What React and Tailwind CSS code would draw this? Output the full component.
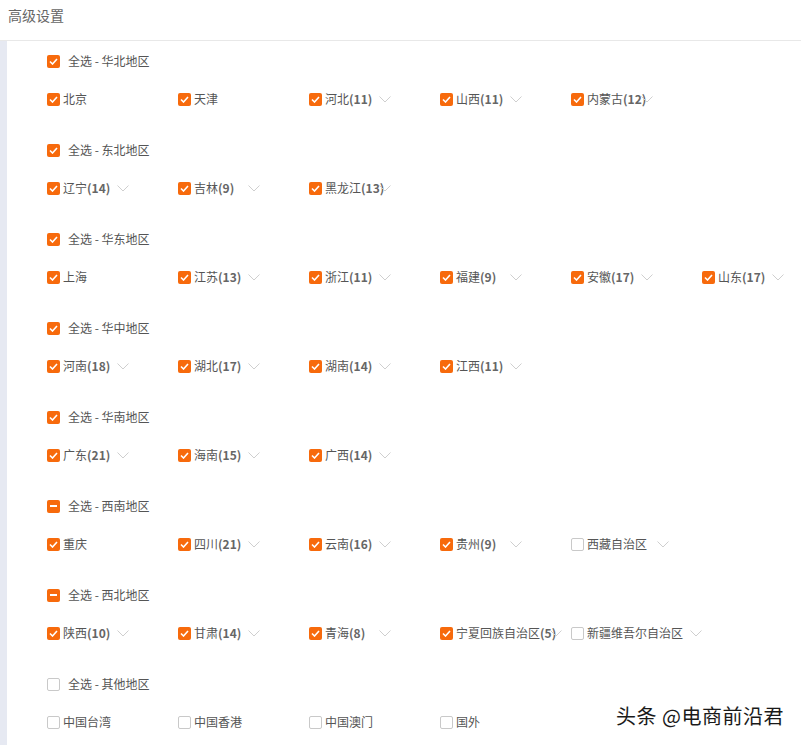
import React from 'react'

const regions = [
  {
    name: '华北地区',
    state: 'checked',
    items: [
      { name: '北京', on: true, plain: true },
      { name: '天津', on: true, plain: true },
      { name: '河北', count: 11, on: true },
      { name: '山西', count: 11, on: true },
      { name: '内蒙古', count: 12, on: true },
    ],
  },
  {
    name: '东北地区',
    state: 'checked',
    items: [
      { name: '辽宁', count: 14, on: true },
      { name: '吉林', count: 9, on: true },
      { name: '黑龙江', count: 13, on: true },
    ],
  },
  {
    name: '华东地区',
    state: 'checked',
    items: [
      { name: '上海', on: true, plain: true },
      { name: '江苏', count: 13, on: true },
      { name: '浙江', count: 11, on: true },
      { name: '福建', count: 9, on: true },
      { name: '安徽', count: 17, on: true },
      { name: '山东', count: 17, on: true },
    ],
  },
  {
    name: '华中地区',
    state: 'checked',
    items: [
      { name: '河南', count: 18, on: true },
      { name: '湖北', count: 17, on: true },
      { name: '湖南', count: 14, on: true },
      { name: '江西', count: 11, on: true },
    ],
  },
  {
    name: '华南地区',
    state: 'checked',
    items: [
      { name: '广东', count: 21, on: true },
      { name: '海南', count: 15, on: true },
      { name: '广西', count: 14, on: true },
    ],
  },
  {
    name: '西南地区',
    state: 'partial',
    items: [
      { name: '重庆', on: true, plain: true },
      { name: '四川', count: 21, on: true },
      { name: '云南', count: 16, on: true },
      { name: '贵州', count: 9, on: true },
      { name: '西藏自治区', on: false },
    ],
  },
  {
    name: '西北地区',
    state: 'partial',
    items: [
      { name: '陕西', count: 10, on: true },
      { name: '甘肃', count: 14, on: true },
      { name: '青海', count: 8, on: true },
      { name: '宁夏回族自治区', count: 5, on: true },
      { name: '新疆维吾尔自治区', on: false },
    ],
  },
  {
    name: '其他地区',
    state: 'none',
    items: [
      { name: '中国台湾', on: false, plain: true },
      { name: '中国香港', on: false, plain: true },
      { name: '中国澳门', on: false, plain: true },
      { name: '国外', on: false, plain: true },
    ],
  },
]

function Box({ state }) {
  if (state === 'none') {
    return <span className="w-[13px] h-[13px] shrink-0 rounded-[2px] border border-[#c9c9c9] bg-white" />
  }
  return (
    <span className="w-[13px] h-[13px] shrink-0 rounded-[2px] bg-[#f76a0c] flex items-center justify-center">
      {state === 'partial' ? (
        <span className="w-[7px] h-[2px] bg-white" />
      ) : (
        <svg width="9" height="7" viewBox="0 0 9 7" fill="none">
          <polyline points="1,3.5 3.5,6 8,1" stroke="#fff" strokeWidth="1.6" />
        </svg>
      )}
    </span>
  )
}

function Chevron() {
  return (
    <svg width="12" height="7" viewBox="0 0 12 7" fill="none" className="shrink-0">
      <polyline points="0.5,0.5 6,6 11.5,0.5" stroke="#cfcfcf" strokeWidth="1" />
    </svg>
  )
}

function Item({ item }) {
  return (
    <div className="w-[131px] shrink-0 flex items-center">
      <div className="min-w-[60px] flex items-center gap-[3px]">
        <Box state={item.on ? 'checked' : 'none'} />
        <span className="flex whitespace-nowrap">
          {item.name}
          {item.count != null && (
            <span className="w-0 whitespace-nowrap font-bold text-[#666]">({item.count})</span>
          )}
        </span>
      </div>
      {!item.plain && (
        <span className="ml-[10px] flex items-center">
          <Chevron />
        </span>
      )}
    </div>
  )
}

export default function App() {
  return (
    <div
      className="relative w-[801px] h-[745px] bg-white text-[12px] text-[#555] overflow-hidden"
      style={{ fontFamily: '"Microsoft YaHei", "Noto Sans CJK SC", "Noto Sans", sans-serif' }}
    >
      {/* Title bar */}
      <div className="h-[41px] px-2 pt-[4px] border-b border-[#e8e8e8] text-[14px] text-[#666] leading-[22px]">
        高级设置
      </div>

      {/* Region list */}
      <div className="h-[704px] border-l-[7px] border-[#e6e9f2] pl-[40px] pt-[10px]">
        {regions.map((r, i) => (
          <div key={r.name} className={i === 0 ? '' : 'mt-[31px]'}>
            <div className="h-5 flex items-center gap-2">
              <Box state={r.state} />
              <span>全选 - {r.name}</span>
            </div>
            <div className="mt-[18px] h-5 flex items-center">
              {r.items.map((it) => (
                <Item key={it.name} item={it} />
              ))}
            </div>
          </div>
        ))}
      </div>

      {/* Watermark */}
      <div
        className="absolute right-[17px] bottom-[14px] text-[20px] text-[#1a1a1a] tracking-[0.5px]"
        style={{ textShadow: '0 0 2px #fff, 1px 1px 0 #fff, -1px -1px 0 #fff' }}
      >
        头条 @电商前沿君
      </div>
    </div>
  )
}
